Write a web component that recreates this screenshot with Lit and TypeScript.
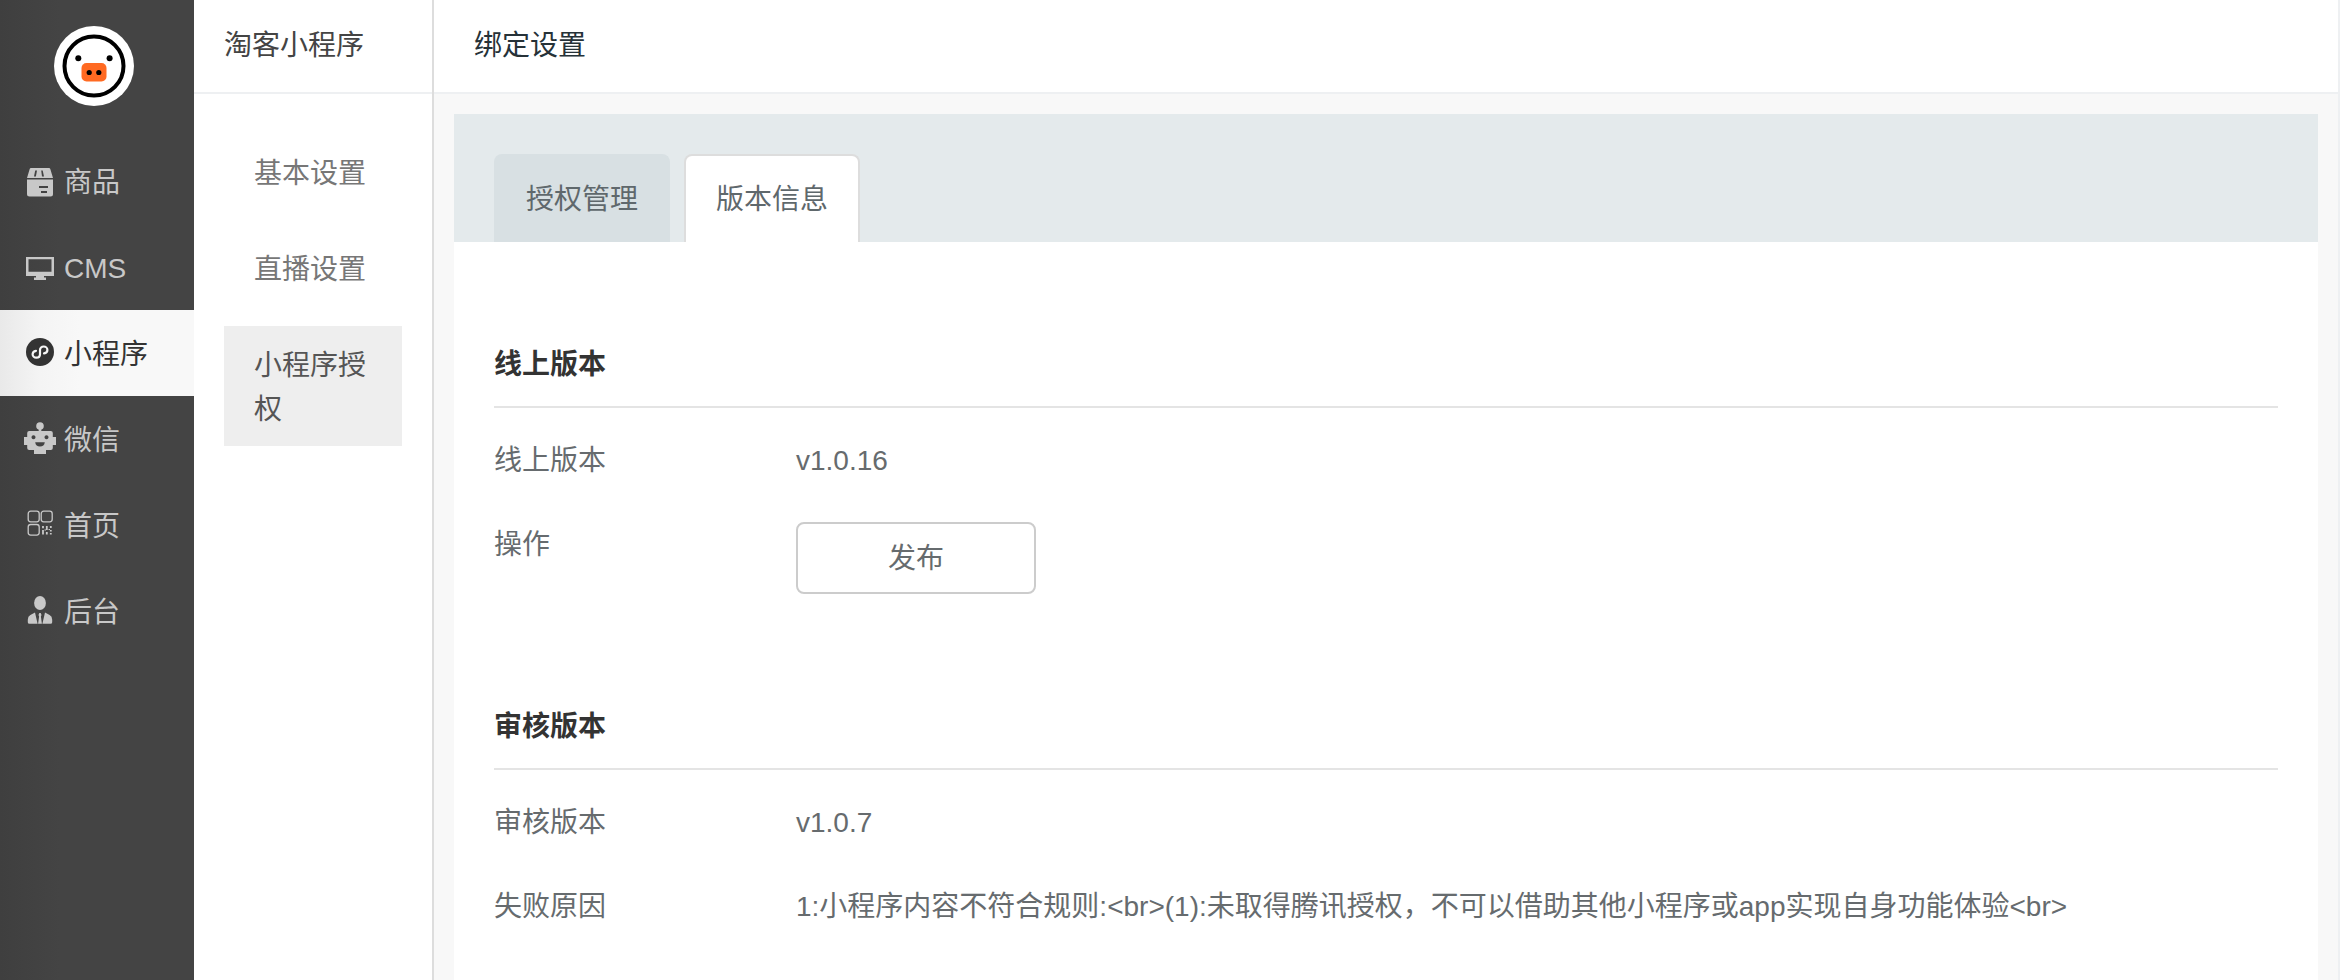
import { LitElement, html, svg, css } from "lit";
import { customElement, property, state } from "lit/decorators.js";
import { classMap } from "lit/directives/class-map.js";

const icons: Record<string, unknown> = {
  goods: svg`
    <g transform="translate(0 1)" fill="currentColor" fill-rule="evenodd">
      <path d="M7 2h18q1 0 1.3 1L29 12H3L5.700 3Q6 2 7 2zM13 4.500h-1.800l-1.200 6h1.900zM17.200 4.500l.8 6h2l-1.300-6z"/>
      <path d="M3 13.500h26V28q0 2.500-2.500 2.500h-21Q3 30.500 3 28zM15 20v2h9v-2zM17 25v2h6v-2z"/>
    </g>`,
  monitor: svg`
    <path transform="translate(0 1)" fill="currentColor" fill-rule="evenodd" d="M2 5h28v19H20v1.500h2V28H10v-2.500h2V24H2zM4.500 7.200v12.600h23V7.200z"/>`,
  program: svg`
    <g transform="translate(0 1)">
      <circle cx="16" cy="14" r="14" fill="currentColor"/>
      <path fill="none" stroke="#f6f6f6" stroke-width="2.200" stroke-linecap="round" d="M20 15.400c2-.4 3.400-1.700 3.400-3.500 0-2-1.700-3.400-3.700-3.400-2.200 0-3.700 1.500-3.700 3.400v4.300c0 2-1.500 3.500-3.700 3.500-2 0-3.700-1.400-3.700-3.400 0-1.800 1.400-3.100 3.400-3.500"/>
    </g>`,
  robot: svg`
    <g transform="translate(0 -1)">
      <circle cx="16" cy="4" r="3.800" fill="currentColor"/>
      <path fill="currentColor" fill-rule="evenodd" d="M14.700 5h2.600v4h9.500q2 0 2 2v4H32v8h-3.200v3q0 2-2 2H22v4H10v-4H5.200q-2 0-2-2v-3H0v-8h3.200v-4q0-2 2-2h9.500zM9.500 13.200a2 2 0 1 0 .01 0zM22.500 13.200a2 2 0 1 0 .01 0zM11.200 20.200q.6 4.300 4.800 4.300t4.800-4.300z"/>
    </g>`,
  qrcode: svg`
    <g fill="none" stroke="currentColor" stroke-width="1.300">
      <rect x="4.200" y="2.200" width="11" height="10.600" rx="2.500"/>
      <rect x="17.200" y="2.200" width="11" height="10.600" rx="2.500"/>
      <rect x="4.200" y="15.500" width="11" height="10.600" rx="2.500"/>
      <path stroke-width="1.800" d="M19 17v2.300M19 21v4.500M22.800 17v4M22.800 23v2.500M26.800 17v2M26.800 21v1.500M26.800 24v1.500"/>
      <path stroke-width="1.200" d="M20.500 21h1.500M24.500 20.500h1.500"/>
    </g>`,
  person: svg`
    <g transform="translate(0 -1)" fill="currentColor">
      <ellipse cx="16" cy="9" rx="5.900" ry="7"/>
      <path d="M11 18.500l2.600 11.300H5.500q-1.700 0-1.700-1.500v-2.600q0-3.200 2.600-4.600zM21 18.500l4.600 2.600q2.600 1.400 2.600 4.600v2.600q0 1.500-1.700 1.500h-8.100z"/>
      <path d="M15.300 19h1.400l.8 2-.6 1.500 1 7.300h-3.800l1-7.300-.6-1.500z"/>
    </g>`,
};

@customElement("side-nav")
class SideNav extends LitElement {
  @state() private current = "小程序";

  private items = [
    { label: "商品", icon: "goods" },
    { label: "CMS", icon: "monitor" },
    { label: "小程序", icon: "program" },
    { label: "微信", icon: "robot" },
    { label: "首页", icon: "qrcode" },
    { label: "后台", icon: "person" },
  ];

  static styles = css`
    :host {
      display: block;
      background: linear-gradient(to right, #3f3f3f, #444 60px);
    }
    .logo {
      display: block;
      width: 80px;
      height: 80px;
      margin: 26px 0 32px 54px;
    }
    .item {
      display: flex;
      align-items: center;
      gap: 8px;
      height: 86px;
      padding-left: 24px;
      color: #c8c8c8;
      text-decoration: none;
    }
    .item.active {
      color: #333;
      background: linear-gradient(to right, #e9e9e9, #f4f4f4 40px, #f8f8f8 80px);
    }
    .icon {
      width: 32px;
      height: 32px;
      flex: none;
      overflow: visible;
    }
    .label {
      padding-top: 4px;
    }
  `;

  render() {
    return html`
      <svg class="logo" viewBox="0 0 80 80" role="img" aria-label="logo">
        <circle cx="40" cy="40" r="40" fill="#fff" />
        <circle cx="40" cy="40" r="29.500" fill="#fff" stroke="#000" stroke-width="4" />
        <circle cx="24.300" cy="32.300" r="3" />
        <circle cx="55.600" cy="32.300" r="3" />
        <rect x="27.500" y="37" width="25" height="18.500" rx="5" fill="#ff6a22" />
        <circle cx="35.200" cy="46.500" r="2.600" />
        <circle cx="44.800" cy="46.500" r="2.600" />
      </svg>
      <nav>
        ${this.items.map(
          (item) => html`<a
            href="#"
            class=${classMap({ item: true, active: item.label === this.current })}
            @click=${(e: Event) => {
              e.preventDefault();
              this.current = item.label;
            }}
          ><svg class="icon" viewBox="0 0 32 32" aria-hidden="true">${icons[item.icon]}</svg><span class="label">${item.label}</span></a>`
        )}
      </nav>
    `;
  }
}

@customElement("sub-menu")
class SubMenu extends LitElement {
  @state() private current = "小程序授权";

  static styles = css`
    :host {
      display: block;
      background: #fff;
      border-right: 2px solid #ddd;
    }
    .title {
      height: 92px;
      padding-left: 30px;
      border-bottom: 2px solid #eef0f2;
      line-height: 92px;
      color: #444;
    }
    .list {
      display: flex;
      flex-direction: column;
      gap: 20px;
      padding: 40px 30px;
    }
    .link {
      padding: 18px 30px 14px;
      color: #777;
      text-decoration: none;
    }
    .link.active {
      color: #555;
      background: #eee;
    }
  `;

  render() {
    return html`
      <div class="title">淘客小程序</div>
      <nav class="list">
        ${["基本设置", "直播设置", "小程序授权"].map(
          (label) => html`<a
            href="#"
            class=${classMap({ link: true, active: label === this.current })}
            @click=${(e: Event) => {
              e.preventDefault();
              this.current = label;
            }}
          >${label}</a>`
        )}
      </nav>
    `;
  }
}

interface Row {
  label: string;
  value?: string;
  action?: string;
}

@customElement("version-section")
class VersionSection extends LitElement {
  @property() heading = "";
  @property({ attribute: false }) rows: Row[] = [];

  static styles = css`
    :host {
      display: block;
      line-height: 46px;
    }
    .heading {
      margin: 0 0 30px;
      padding-bottom: 18px;
      border-bottom: 2px solid #e4e4e4;
      font-size: 28px;
      font-weight: 700;
      color: #333;
    }
    .rows {
      display: flex;
      flex-direction: column;
      gap: 38px;
      margin: 0;
    }
    .row {
      display: grid;
      grid-template-columns: 302px 1fr;
      color: #666b6e;
    }
    .value {
      margin: 0;
    }
    .action {
      display: block;
      width: 240px;
      height: 72px;
      padding: 2px 0 0;
      border: 2px solid #ccc;
      border-radius: 8px;
      background: #fff;
      color: inherit;
      font: inherit;
    }
  `;

  render() {
    return html`
      <h2 class="heading">${this.heading}</h2>
      <dl class="rows">
        ${this.rows.map(
          (row) => html`<div class="row">
            <dt>${row.label}</dt>
            <dd class="value">${row.action ? html`<button class="action" type="button">${row.action}</button>` : row.value}</dd>
          </div>`
        )}
      </dl>
    `;
  }
}

@customElement("app-root")
class AppRoot extends LitElement {
  @state() private tab = "版本信息";

  private online: Row[] = [
    { label: "线上版本", value: "v1.0.16" },
    { label: "操作", action: "发布" },
  ];

  private review: Row[] = [
    { label: "审核版本", value: "v1.0.7" },
    {
      label: "失败原因",
      value: "1:小程序内容不符合规则:<br>(1):未取得腾讯授权，不可以借助其他小程序或app实现自身功能体验<br>",
    },
  ];

  static styles = css`
    :host {
      display: grid;
      grid-template-columns: 194px 240px 1fr;
      min-height: 100vh;
      font: 28px/44px "Liberation Sans", "Noto Sans CJK SC", sans-serif;
      background: #f8f8f8;
    }
    .main {
      display: flex;
      flex-direction: column;
      min-width: 0;
      border-right: 2px solid #eef0f2;
    }
    .title {
      height: 92px;
      margin: 0;
      padding-left: 40px;
      border-bottom: 2px solid #eef0f2;
      background: #fff;
      font-size: 28px;
      font-weight: 400;
      line-height: 92px;
      color: #263238;
    }
    .card {
      flex: 1;
      margin: 20px 20px 0;
      background: #fff;
    }
    .tabs {
      display: flex;
      gap: 14px;
      padding: 40px 40px 0;
      background: #e4eaec;
    }
    .tab {
      height: 88px;
      padding: 2px 30px 0;
      border: 2px solid #d8e0e3;
      border-bottom: 0;
      border-radius: 8px 8px 0 0;
      background: #d8e0e3;
      color: #5f686c;
      font: inherit;
    }
    .tab.active {
      border-color: #ddd;
      background: #fff;
    }
    .body {
      display: flex;
      flex-direction: column;
      gap: 110px;
      padding: 100px 40px 50px;
    }
  `;

  render() {
    return html`
      <side-nav></side-nav>
      <sub-menu></sub-menu>
      <main class="main">
        <h1 class="title">绑定设置</h1>
        <div class="card">
          <div class="tabs" role="tablist">
            ${["授权管理", "版本信息"].map(
              (label) => html`<button
                type="button"
                role="tab"
                aria-selected=${label === this.tab}
                class=${classMap({ tab: true, active: label === this.tab })}
                @click=${() => (this.tab = label)}
              >${label}</button>`
            )}
          </div>
          <div class="body">
            <version-section heading="线上版本" .rows=${this.online}></version-section>
            <version-section heading="审核版本" .rows=${this.review}></version-section>
          </div>
        </div>
      </main>
    `;
  }
}
